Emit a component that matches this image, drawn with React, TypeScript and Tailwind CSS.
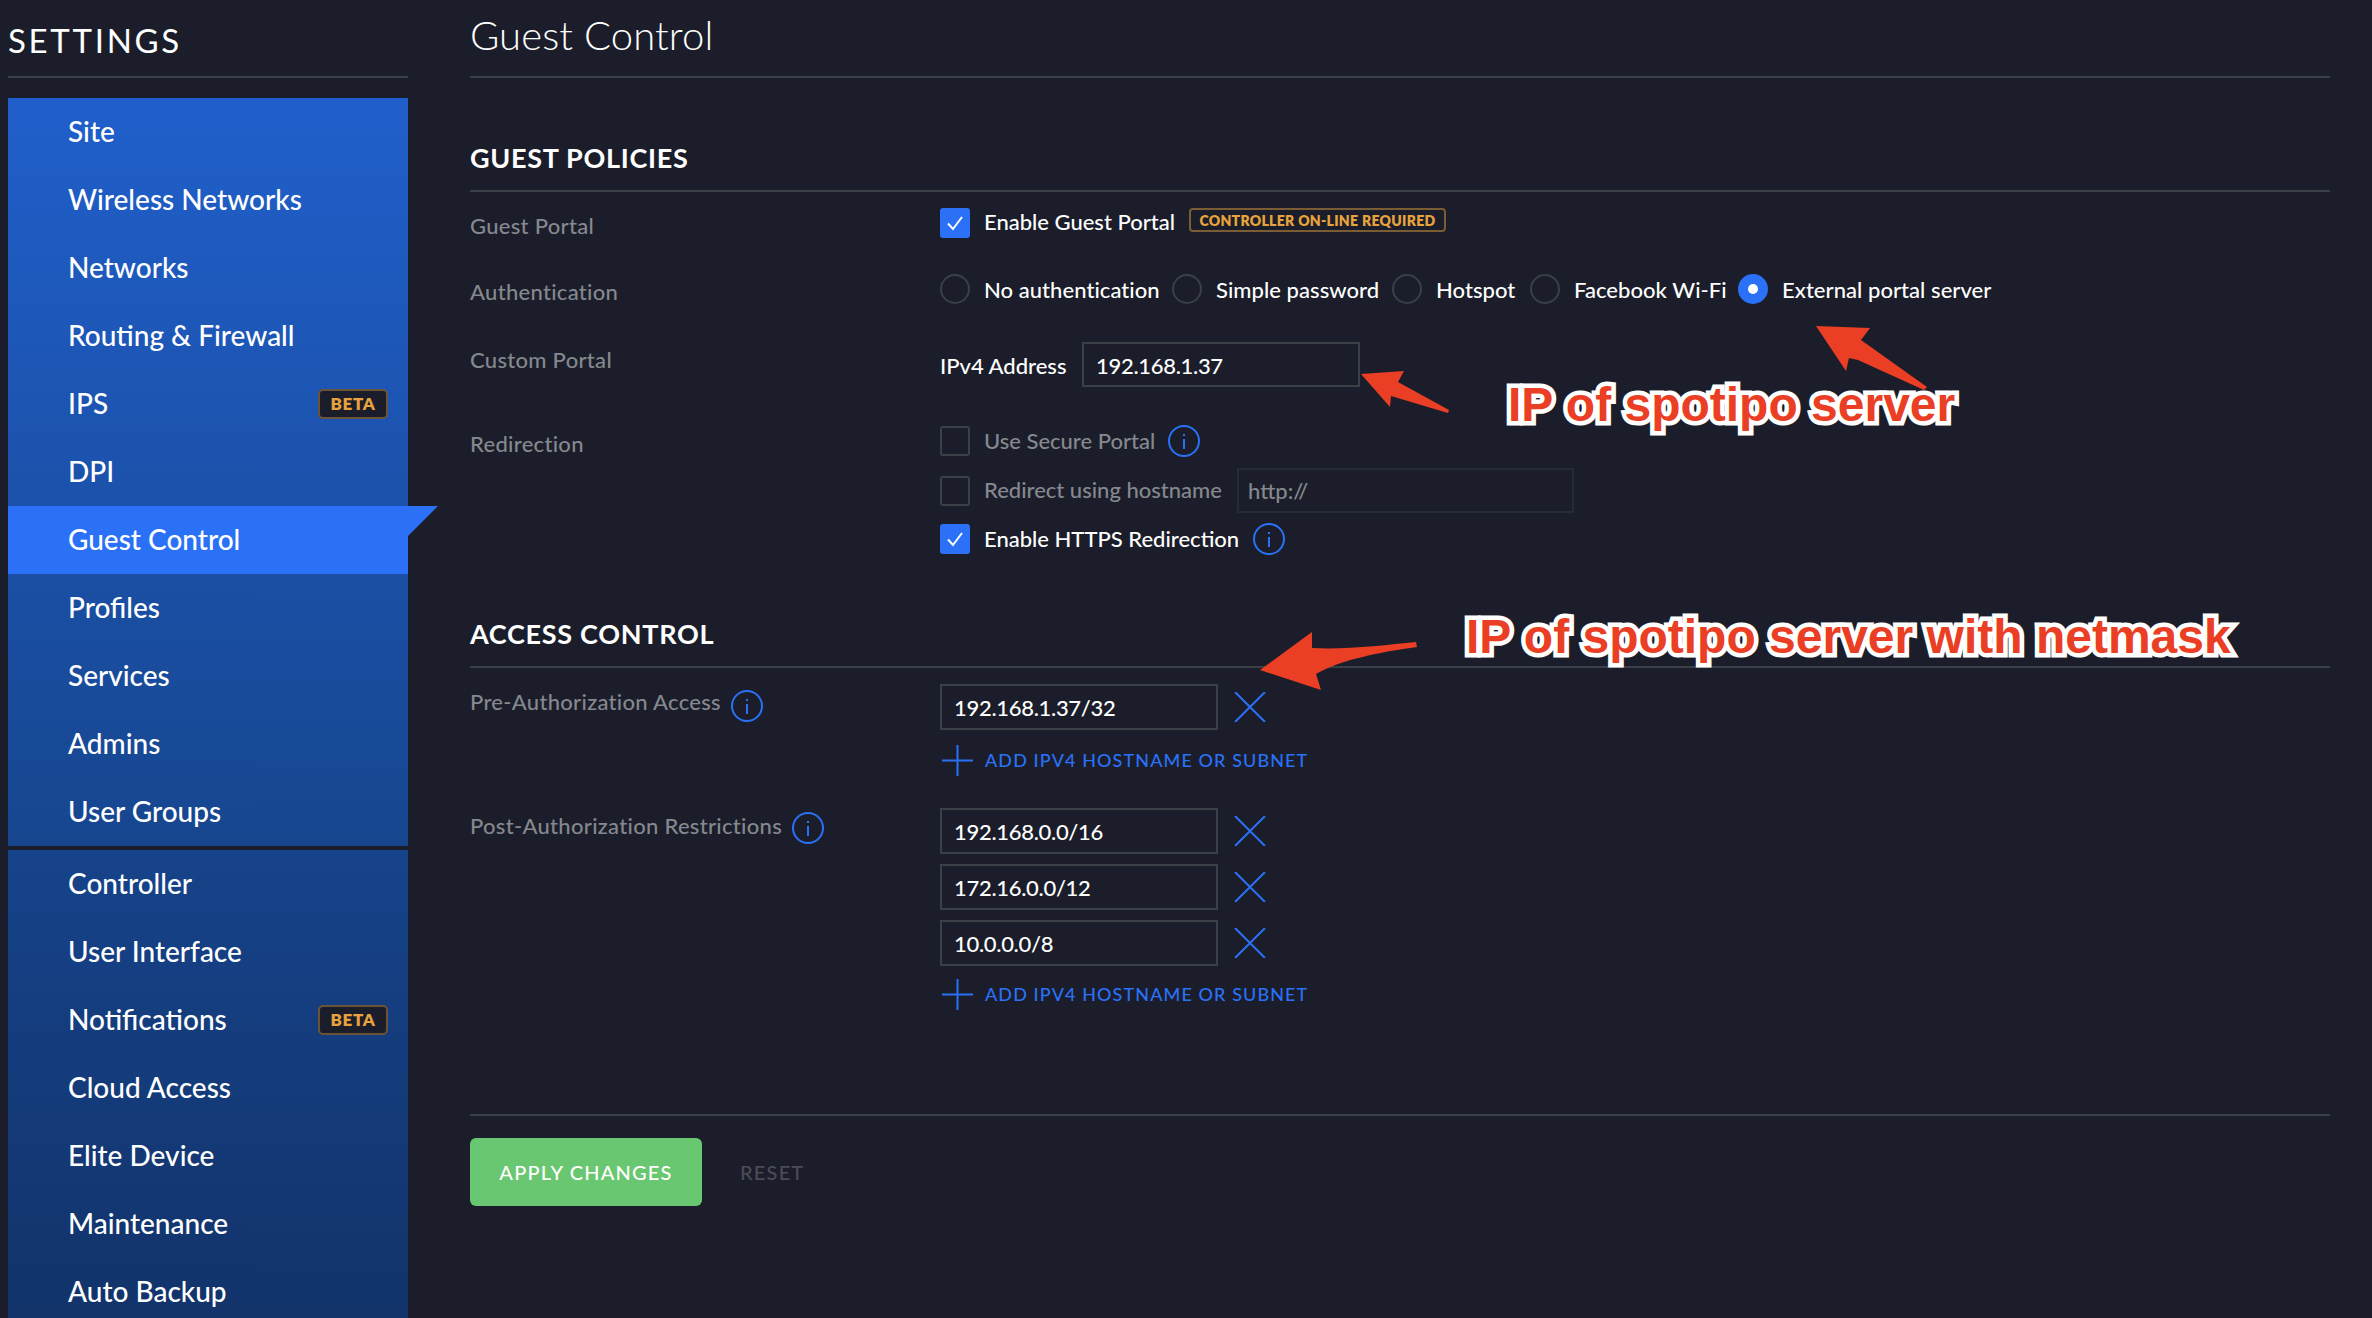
const NAV_TOP = [
  { name: 'Site' },
  { name: 'Wireless Networks' },
  { name: 'Networks' },
  { name: 'Routing & Firewall' },
  { name: 'IPS', beta: true },
  { name: 'DPI' },
  { name: 'Guest Control', active: true },
  { name: 'Profiles' },
  { name: 'Services' },
  { name: 'Admins' },
  { name: 'User Groups' },
];

const NAV_BOTTOM = [
  { name: 'Controller' },
  { name: 'User Interface' },
  { name: 'Notifications', beta: true },
  { name: 'Cloud Access' },
  { name: 'Elite Device' },
  { name: 'Maintenance' },
  { name: 'Auto Backup' },
];

type NavEntry = { name: string; beta?: boolean; active?: boolean };

function NavItem({ item }: { item: NavEntry }) {
  return (
    <div
      className={
        'relative flex h-[68px] shrink-0 items-center justify-between pl-[60px] pr-5 text-[28px] font-medium text-white ' +
        (item.active ? 'bg-[#2a71f7]' : '')
      }
    >
      <span className="-mt-[2px]">{item.name}</span>
      {item.beta && (
        <span className="flex h-[30px] w-[70px] items-center justify-center rounded-[5px] border-2 border-[#6b5338] bg-[#1b1e2a] text-[17px] font-extrabold tracking-[0.6px] text-[#e8a33d]">
          BETA
        </span>
      )}
      {item.active && (
        <svg className="absolute left-full top-0 h-[30px] w-[30px]" viewBox="0 0 30 30">
          <path d="M0 0H30L0 30Z" fill="#2a71f7" />
        </svg>
      )}
    </div>
  );
}

function CheckBox({ checked }: { checked?: boolean }) {
  if (!checked) {
    return <span className="block h-[30px] w-[30px] shrink-0 rounded-[3px] border-2 border-[#3a4046]" />;
  }
  return (
    <span className="flex h-[30px] w-[30px] shrink-0 items-center justify-center rounded-[3px] bg-[#2a71f7]">
      <svg width="20" height="20" viewBox="0 0 20 20" fill="none" stroke="#fff" strokeWidth="2">
        <path d="M3 10.5L8 16L17 4" />
      </svg>
    </span>
  );
}

function Radio({ checked }: { checked?: boolean }) {
  if (checked) {
    return (
      <span className="flex h-[30px] w-[30px] shrink-0 items-center justify-center rounded-full bg-[#2a71f7]">
        <span className="h-[10px] w-[10px] rounded-full bg-white" />
      </span>
    );
  }
  return <span className="block h-[30px] w-[30px] shrink-0 rounded-full border-2 border-[#3a4046]" />;
}

function InfoIcon() {
  return (
    <svg className="shrink-0" width="32" height="32" viewBox="0 0 32 32" fill="none" stroke="#2a71f7" strokeWidth="2">
      <circle cx="16" cy="16" r="15" />
      <path d="M16 14V24" />
      <path d="M16 9V11" />
    </svg>
  );
}

function CrossIcon() {
  return (
    <svg className="shrink-0" width="32" height="30" viewBox="0 0 32 30" fill="none" stroke="#2a71f7" strokeWidth="2">
      <path d="M1 0L31 30M31 0L1 30" />
    </svg>
  );
}

function AddRow() {
  return (
    <div className="flex h-[31px] items-center pl-[2px] text-[18px] font-medium tracking-[1.1px] text-[#2a71f7]">
      <svg className="shrink-0" width="31" height="31" viewBox="0 0 31 31" fill="none" stroke="#2a71f7" strokeWidth="2">
        <path d="M15.5 0V31M0 15.5H31" />
      </svg>
      <span className="ml-3">ADD IPV4 HOSTNAME OR SUBNET</span>
    </div>
  );
}

function SubnetRow({ value }: { value: string }) {
  return (
    <div className="flex items-center">
      <div className="flex h-[46px] w-[278px] items-center border-2 border-[#3a4046] pl-3 text-[22px] font-medium tracking-[-0.3px] text-white">
        {value}
      </div>
      <span className="ml-4">
        <CrossIcon />
      </span>
    </div>
  );
}

function SectionTitle({ children }: { children: string }) {
  return (
    <h2 className="mt-[62px] border-b-2 border-[#3a4046] pb-[14px] text-[27px] font-bold leading-[36px] tracking-[0.7px] text-white">
      {children}
    </h2>
  );
}

const annotation =
  "absolute font-['Liberation_Sans',sans-serif] font-bold whitespace-nowrap text-[#ea3f24] [-webkit-text-stroke:9px_white] [paint-order:stroke_fill]";

const fieldLabel = 'font-medium tracking-[0.3px] text-[#85888e]';

function RadioOption({ label, checked, className }: { label: string; checked?: boolean; className: string }) {
  return (
    <span className={'flex items-center ' + className}>
      <Radio checked={checked} />
      <span className="ml-[14px]">{label}</span>
    </span>
  );
}

export default function App() {
  return (
    <div className="relative flex h-[1318px] overflow-hidden bg-[#1b1e2a] font-['Lato',sans-serif] text-[22px] text-white">
      <aside className="ml-2 flex w-[400px] shrink-0 flex-col">
        <div className="h-[78px] shrink-0 border-b-2 border-[#3a4046] pt-[20px] text-[33px] leading-[40px] tracking-[2.7px]">
          SETTINGS
        </div>
        <div className="mt-5 bg-gradient-to-b from-[#205fcb] to-[#17468f]">
          {NAV_TOP.map((item) => (
            <NavItem key={item.name} item={item} />
          ))}
        </div>
        <div className="mt-1 flex-1 bg-gradient-to-b from-[#16438a] to-[#12336a]">
          {NAV_BOTTOM.map((item) => (
            <NavItem key={item.name} item={item} />
          ))}
        </div>
      </aside>

      <main className="ml-[62px] w-[1860px] shrink-0">
        <h1 className="h-[78px] border-b-2 border-[#3a4046] text-[40px] font-light leading-[70px] tracking-[0.1px]">Guest Control</h1>

        <SectionTitle>GUEST POLICIES</SectionTitle>

        <div className="mt-4 flex h-[30px] items-center font-medium">
          <span className={'w-[470px] pt-[4px] ' + fieldLabel}>Guest Portal</span>
          <CheckBox checked />
          <span className="ml-[14px] -mt-[4px]">Enable Guest Portal</span>
          <span className="ml-[14px] -mt-[6px] flex h-[24px] w-[257px] items-center justify-center rounded-[4px] border-2 border-[#7a5c35] text-[14px] font-extrabold tracking-[0.3px] text-[#e8a33d]">
            CONTROLLER ON-LINE REQUIRED
          </span>
        </div>

        <div className="mt-9 flex h-[30px] items-center font-medium tracking-[0.05px]">
          <span className={'w-[470px] pt-[4px] ' + fieldLabel}>Authentication</span>
          <RadioOption label="No authentication" className="w-[232px]" />
          <RadioOption label="Simple password" className="w-[220px]" />
          <RadioOption label="Hotspot" className="w-[138px]" />
          <RadioOption label="Facebook Wi-Fi" className="w-[208px]" />
          <RadioOption label="External portal server" checked className="" />
        </div>

        <div className="mt-[38px] flex h-[45px] items-center font-medium">
          <span className={'w-[470px] -mt-[10px] ' + fieldLabel}>Custom Portal</span>
          <span className="w-[142px] pt-[1px]">IPv4 Address</span>
          <div className="flex h-[45px] w-[278px] items-center border-2 border-[#3a4046] pl-3 pt-[2px] tracking-[-0.3px] text-white">192.168.1.37</div>
        </div>

        <div className="mt-[39px] flex font-medium">
          <span className={'w-[470px] pt-[1px] ' + fieldLabel}>Redirection</span>
          <div>
            <div className="flex h-[30px] items-center text-[#85888e]">
              <CheckBox />
              <span className="ml-[14px] -mt-[2px]">Use Secure Portal</span>
              <span className="ml-[13px]">
                <InfoIcon />
              </span>
            </div>
            <div className="mt-[12px] flex h-[45px] items-center text-[#85888e]">
              <CheckBox />
              <span className="ml-[14px] -mt-[2px] w-[253px]">Redirect using hostname</span>
              <div className="flex h-[45px] w-[337px] items-center border-2 border-[#262a35] pl-[9px] text-[#85888e]">http://</div>
            </div>
            <div className="mt-[11px] flex h-[30px] items-center">
              <CheckBox checked />
              <span className="ml-[14px] -mt-[2px]">Enable HTTPS Redirection</span>
              <span className="ml-[14px]">
                <InfoIcon />
              </span>
            </div>
          </div>
        </div>

        <SectionTitle>ACCESS CONTROL</SectionTitle>

        <div className="mt-[16px] flex">
          <div className="flex w-[470px] items-start">
            <span className={'pt-[1px] ' + fieldLabel}>Pre-Authorization Access</span>
            <span className="ml-[10px] mt-[6px]">
              <InfoIcon />
            </span>
          </div>
          <div>
            <SubnetRow value="192.168.1.37/32" />
            <div className="mt-[15px]">
              <AddRow />
            </div>
          </div>
        </div>

        <div className="mt-8 flex">
          <div className="flex w-[470px] items-start">
            <span className={'pt-[1px] ' + fieldLabel}>Post-Authorization Restrictions</span>
            <span className="ml-[10px] mt-1">
              <InfoIcon />
            </span>
          </div>
          <div>
            <div className="flex flex-col gap-[10px]">
              <SubnetRow value="192.168.0.0/16" />
              <SubnetRow value="172.16.0.0/12" />
              <SubnetRow value="10.0.0.0/8" />
            </div>
            <div className="mt-[13px]">
              <AddRow />
            </div>
          </div>
        </div>

        <div className="mt-[104px] border-t-2 border-[#3a4046] pt-[22px]">
          <div className="flex items-center">
            <button className="h-[68px] w-[232px] rounded-[6px] bg-[#69c771] text-[20px] font-medium tracking-[1.2px] text-white">
              APPLY CHANGES
            </button>
            <span className="ml-[38px] text-[20px] font-medium tracking-[1.2px] text-[#4a4b57]">RESET</span>
          </div>
        </div>
      </main>

      <svg className="pointer-events-none absolute left-0 top-0" width="2372" height="1318" fill="#ea3f24">
        <path d="M1361 374L1404 371L1398 382L1449 410L1448 413L1391 396L1390 407Z" />
        <path d="M1816 326L1870 328L1861 340L1927 387L1924 390L1858 360L1849 358L1846 371Z" />
        <path d="M1260 670L1312 632L1312 648C1345 650 1385 645 1416 642L1417 647C1380 652 1340 660 1316 674L1321 690Z" />
      </svg>
      <span className={annotation + ' left-[1508px] top-[377px] text-[48px] leading-[56px]'}>IP of spotipo server</span>
      <span className={annotation + ' left-[1466px] top-[609px] text-[48px] leading-[56px]'}>IP of spotipo server with netmask</span>
    </div>
  );
}
